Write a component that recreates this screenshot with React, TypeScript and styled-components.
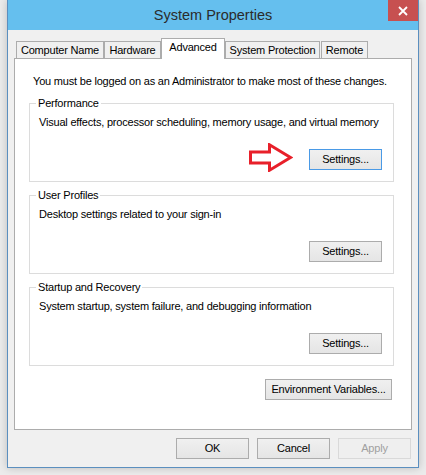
import React from "react";
import styled, { createGlobalStyle } from "styled-components";

const GlobalStyle = createGlobalStyle`
  html, body {
    margin: 0;
    padding: 0;
    background: #ebebeb;
  }
  body {
    font-family: "Liberation Sans", Arial, sans-serif;
    font-size: 11px;
    letter-spacing: -0.2px;
    color: #000;
  }
`;

const Page = styled.div`
  width: 426px;
  height: 475px;
  overflow: hidden;
  padding-left: 7px;
  box-sizing: border-box;
  background: #ebebeb;
`;

const Window = styled.div`
  width: 412px;
  height: 468px;
  box-sizing: border-box;
  border: 1px solid #5b8fbf;
  border-top: 0;
  background: #f0f0f0;
  display: flex;
  flex-direction: column;
  box-shadow: 0 0 8px rgba(0, 0, 0, 0.2);
`;

const TitleBar = styled.div`
  height: 30px;
  flex: none;
  background: #65bfee;
  display: grid;
  grid-template-columns: 1fr auto 1fr;
`;

const Title = styled.div`
  grid-column: 2;
  font-size: 14.5px;
  letter-spacing: 0;
  line-height: 30px;
  color: #2b2b2b;
`;

const CloseButton = styled.div`
  grid-column: 3;
  justify-self: end;
  width: 30px;
  height: 21px;
  background: #c75050;
  display: flex;
  align-items: center;
  justify-content: center;
`;

const Body = styled.div`
  flex: 1;
  display: flex;
  flex-direction: column;
  padding: 8px 6px 8px 6px;
  min-height: 0;
`;

const TabStrip = styled.div`
  display: flex;
  align-items: flex-end;
  height: 21px;
  padding-left: 2px;
  margin-bottom: -1px;
  position: relative;
  z-index: 1;
`;

const Tab = styled.div<{ $w: number; $active?: boolean; $gap?: number }>`
  box-sizing: border-box;
  width: ${(p) => p.$w}px;
  height: ${(p) => (p.$active ? 21 : 17)}px;
  margin-bottom: ${(p) => (p.$active ? 0 : 1)}px;
  margin-left: ${(p) => p.$gap ?? 0}px;
  border: 1px solid #acacac;
  border-bottom: 0;
  background: ${(p) => (p.$active ? "#ffffff" : "#f0f0f0")};
  text-align: center;
  line-height: ${(p) => (p.$active ? 17 : 16)}px;
  white-space: nowrap;
`;

const Panel = styled.div`
  flex: 1;
  box-sizing: border-box;
  border: 1px solid #acacac;
  background: #ffffff;
  padding: 15px 17px 0 14px;
  display: flex;
  flex-direction: column;
`;

const Notice = styled.div`
  line-height: 15px;
  padding-left: 4px;
  margin-bottom: 1px;
  white-space: nowrap;
`;

const Group = styled.div`
  margin-top: 13px;
  border: 1px solid #dcdcdc;
  padding: 0 11px 11px 9px;
  display: flex;
  flex-direction: column;
  &:first-of-type {
    margin-top: 14px;
  }
`;

const Legend = styled.div`
  align-self: flex-start;
  margin: -8px 0 0 -3px;
  padding: 0 2px;
  background: #ffffff;
  line-height: 15px;
  height: 15px;
`;

const Description = styled.div`
  margin-top: 4px;
  line-height: 15px;
  white-space: nowrap;
`;

const ButtonRow = styled.div<{ $top: number; $right?: number }>`
  display: flex;
  justify-content: flex-end;
  align-items: center;
  gap: 16px;
  margin-top: ${(p) => p.$top}px;
  margin-right: ${(p) => p.$right ?? 0}px;
`;

const Button = styled.button<{ $w: number; $default?: boolean }>`
  box-sizing: border-box;
  width: ${(p) => p.$w}px;
  height: 21px;
  padding: 0;
  margin: 0;
  border: 1px solid ${(p) => (p.$default ? "#4a9ae6" : "#acacac")};
  background: linear-gradient(#f0f0f0, #e5e5e5);
  font-family: "Liberation Sans", Arial, sans-serif;
  font-size: 11px;
  letter-spacing: -0.2px;
  line-height: 19px;
  color: #000;
  white-space: nowrap;
  &:disabled {
    border-color: #d9d9d9;
    background: #efefef;
    color: #a0a0a0;
  }
`;

const ArrowSvg = styled.svg`
  display: block;
  margin: -6px 0 -2px 0;
  flex: none;
`;

const Footer = styled.div`
  display: flex;
  justify-content: flex-end;
  gap: 8px;
  margin-top: 8px;
  padding-right: 1px;
`;

const RedArrow = () => (
  <ArrowSvg width="44" height="29" viewBox="0 0 44 29">
    <polygon
      points="1.5,9 20.5,9 20.5,1.8 41.5,14.5 20.5,27.2 20.5,20 1.5,20"
      fill="none"
      stroke="#e8202a"
      strokeWidth="3"
      strokeLinejoin="miter"
    />
  </ArrowSvg>
);

const CloseIcon = () => (
  <svg width="10" height="10" viewBox="0 0 10 10">
    <path d="M1 1 L9 9 M9 1 L1 9" stroke="#ffffff" strokeWidth="1.8" />
  </svg>
);

const tabs = [
  { label: "Computer Name", w: 88 },
  { label: "Hardware", w: 57 },
  { label: "Advanced", w: 64, active: true },
  { label: "System Protection", w: 95 },
  { label: "Remote", w: 47, gap: 1 },
];

const groups = [
  {
    title: "Performance",
    text: "Visual effects, processor scheduling, memory usage, and virtual memory",
    arrow: true,
  },
  { title: "User Profiles", text: "Desktop settings related to your sign-in" },
  {
    title: "Startup and Recovery",
    text: "System startup, system failure, and debugging information",
  },
];

export default function App() {
  return (
    <>
      <GlobalStyle />
      <Page>
        <Window>
          <TitleBar>
            <Title>System Properties</Title>
            <CloseButton>
              <CloseIcon />
            </CloseButton>
          </TitleBar>
          <Body>
            <TabStrip>
              {tabs.map((t) => (
                <Tab key={t.label} $w={t.w} $active={t.active} $gap={t.gap}>
                  {t.label}
                </Tab>
              ))}
            </TabStrip>
            <Panel>
              <Notice>
                You must be logged on as an Administrator to make most of these changes.
              </Notice>
              {groups.map((g) => (
                <Group key={g.title}>
                  <Legend>{g.title}</Legend>
                  <Description>{g.text}</Description>
                  <ButtonRow $top={19}>
                    {g.arrow && <RedArrow />}
                    <Button $w={73} $default={g.arrow}>
                      Settings...
                    </Button>
                  </ButtonRow>
                </Group>
              ))}
              <ButtonRow $top={13} $right={2}>
                <Button $w={127}>Environment Variables...</Button>
              </ButtonRow>
            </Panel>
            <Footer>
              <Button $w={73}>OK</Button>
              <Button $w={73}>Cancel</Button>
              <Button $w={73} disabled>
                Apply
              </Button>
            </Footer>
          </Body>
        </Window>
      </Page>
    </>
  );
}
